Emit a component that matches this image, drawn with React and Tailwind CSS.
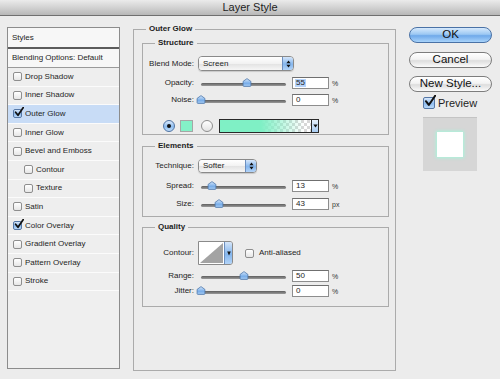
const STYLES = [
  { name: 'Drop Shadow' },
  { name: 'Inner Shadow' },
  { name: 'Outer Glow', checked: true, active: true },
  { name: 'Inner Glow' },
  { name: 'Bevel and Emboss' },
  { name: 'Contour', sub: true },
  { name: 'Texture', sub: true },
  { name: 'Satin' },
  { name: 'Color Overlay', checked: true },
  { name: 'Gradient Overlay' },
  { name: 'Pattern Overlay' },
  { name: 'Stroke' },
]

function CheckMark({ className }) {
  return (
    <svg className={className} viewBox="0 0 10 10" fill="none">
      <path d="M1.6 5.2 L4 8.3 L9.3 0.6" stroke="#111" strokeWidth="1.7" strokeLinecap="round" strokeLinejoin="round" />
    </svg>
  )
}

function Checkbox({ checked, big }) {
  const size = big ? 'w-[12px] h-[12px]' : 'w-[9px] h-[9px]'
  return (
    <span
      className={`relative block shrink-0 ${size} rounded-[2px] border ${
        checked
          ? 'border-[#5577a6] bg-[linear-gradient(#d8e8fb,#8fbdf0_55%,#b9d8f8)]'
          : 'border-[#8e8e8e] bg-[linear-gradient(#ffffff,#e6e6e6)]'
      }`}
    >
      {checked && (
        <CheckMark className={big ? 'absolute -top-[3px] left-[0px] w-[12px] h-[12px]' : 'absolute -top-[3px] left-[0px] w-[10px] h-[10px]'} />
      )}
    </span>
  )
}

function Thumb({ left }) {
  return (
    <svg className="absolute top-[1px] w-[10px] h-[9px]" style={{ left }} viewBox="0 0 10 9">
      <defs>
        <linearGradient id="tg" x1="0" y1="0" x2="0" y2="1">
          <stop offset="0" stopColor="#d7e8fb" />
          <stop offset="0.6" stopColor="#78ade9" />
          <stop offset="1" stopColor="#a9cdf4" />
        </linearGradient>
      </defs>
      <path d="M5 0.6 L8.9 3.4 L8.9 7.6 Q8.9 8.4 8.1 8.4 L1.9 8.4 Q1.1 8.4 1.1 7.6 L1.1 3.4 Z" fill="url(#tg)" stroke="#4d76ab" strokeWidth="0.8" />
    </svg>
  )
}

function Field({ children, sel }) {
  return (
    <div className="ml-[4px] w-[37px] h-[12px] flex items-center pl-[2px] bg-white border border-[#8d8d8d] border-t-[#6f6f6f] text-[8px] leading-none">
      <span className={sel ? 'bg-[#b6d4fb] px-[1px]' : 'px-[1px]'}>{children}</span>
    </div>
  )
}

function SliderRow({ label, value, pos, unit, sel, mt }) {
  return (
    <div className={`flex items-center h-[12px] ${mt}`}>
      <span className="w-[51px] text-right text-[8px] leading-none text-[#222]">{label}</span>
      <div className="relative ml-[4px] w-[90px] h-[12px]">
        <div className="absolute left-[3px] right-[2px] top-[6px] h-[3px] rounded-full bg-[linear-gradient(#5e5e5e,#9a9a9a)]" />
        <Thumb left={3 + pos * 85 - 5} />
      </div>
      <Field sel={sel}>{value}</Field>
      <span className="ml-[3px] text-[7px] leading-none text-[#333]">{unit}</span>
    </div>
  )
}

function Arrows() {
  return (
    <svg className="w-[5px] h-[8px]" viewBox="0 0 5 8">
      <path d="M2.5 0.5 L4.6 3.2 L0.4 3.2 Z M2.5 7.5 L4.6 4.8 L0.4 4.8 Z" fill="#111" />
    </svg>
  )
}

function Select({ value, width }) {
  return (
    <div className={`ml-[4px] ${width} h-full flex items-stretch rounded-[4px] border border-[#8a8a8a] overflow-hidden shadow-[0_1px_1px_rgba(0,0,0,0.15)]`}>
      <div className="flex-1 flex items-center pl-[4px] text-[8px] leading-none bg-[linear-gradient(#ffffff,#f2f2f2_50%,#e2e2e2_51%,#f6f6f6)]">{value}</div>
      <div className="w-[11px] flex items-center justify-center border-l border-[#6c8fbf] bg-[linear-gradient(#d5e6fa,#84b6ee_55%,#b3d4f8)]">
        <Arrows />
      </div>
    </div>
  )
}

function Group({ title, className, children }) {
  return (
    <fieldset className={`border border-[#ababab] p-0 m-0 min-w-0 ${className}`}>
      <legend className="ml-[12px] px-[3px] text-[8px] leading-[10px] font-bold text-[#1c1c1c]">{title}</legend>
      {children}
    </fieldset>
  )
}

function Radio({ on }) {
  return (
    <span
      className={`w-[12px] h-[12px] rounded-full border flex items-center justify-center ${
        on ? 'border-[#4f73a3] bg-[linear-gradient(#dbeafb,#8ebdf0_55%,#bddbf9)]' : 'border-[#8e8e8e] bg-[linear-gradient(#ffffff,#e4e4e4)]'
      }`}
    >
      {on && <span className="w-[4px] h-[4px] rounded-full bg-[#111]" />}
    </span>
  )
}

function Button({ children, primary }) {
  return (
    <div
      className={`w-[83px] h-[16px] rounded-full border flex items-center justify-center text-[11.5px] leading-none text-[#111] ${
        primary
          ? 'border-[#4a72a6] bg-[linear-gradient(#d6e9fc,#9cc8f3_45%,#6fa9ea_55%,#a8d3fa)]'
          : 'border-[#7d7d7d] bg-[linear-gradient(#ffffff,#f3f3f3_45%,#dddddd_55%,#fbfbfb)]'
      }`}
    >
      {children}
    </div>
  )
}

export default function App() {
  return (
    <div className="w-[500px] h-[379px] overflow-hidden bg-[#ececec] font-['Liberation_Sans',Arial,sans-serif] text-[#1e1e1e]">
      {/* title bar */}
      <div className="h-[16px] border-b border-[#707070] bg-[linear-gradient(#ebebeb,#d2d2d2_50%,#b8b8b8)] flex items-center justify-center">
        <span className="text-[11px] leading-none text-[#1d1d1d]">Layer Style</span>
      </div>

      <div className="flex items-start">
        {/* styles list */}
        <div className="ml-[7px] mt-[11px] w-[113px] h-[342px] border border-[#8c8c8c] bg-[#efefef] flex flex-col">
          <div className="h-[21px] flex items-center pl-[4px] text-[8px] bg-[#f7f7f7] border-b-2 border-[#5c5c5c]">Styles</div>
          <div className="h-[19px] flex items-center pl-[4px] text-[8px] bg-[#f7f7f7] border-b border-[#9a9a9a]">Blending Options: Default</div>
          {STYLES.map((s) => (
            <div
              key={s.name}
              className={`h-[18.6px] shrink-0 flex items-center gap-[3px] border-b border-[#fbfbfb] text-[8px] ${
                s.sub ? 'pl-[16px]' : 'pl-[5px]'
              } ${s.active ? 'bg-[#c8dcf6]' : 'bg-[#eeeeee]'}`}
            >
              <Checkbox checked={s.checked} />
              <span>{s.name}</span>
            </div>
          ))}
        </div>

        {/* settings */}
        <Group title="Outer Glow" className="ml-[13px] mt-[8px] w-[263px] h-[347px]">
          <div className="pl-[8px] pr-[6px]">
            <Group title="Structure" className="mt-[4px]">
              <div className="flex items-center h-[15px] mt-[8px]">
                <span className="w-[51px] text-right text-[8px] leading-none">Blend Mode:</span>
                <Select value="Screen" width="w-[96px]" />
              </div>
              <SliderRow label="Opacity:" value="55" pos={0.54} unit="%" sel mt="mt-[6px]" />
              <SliderRow label="Noise:" value="0" pos={0} unit="%" mt="mt-[5px]" />
              <div className="flex items-center h-[14px] mt-[13px] mb-[1px] pl-[20px]">
                <Radio on />
                <span className="ml-[5px] w-[13px] h-[12px] bg-[#84f1c7] border border-[#a6a6a6]" />
                <span className="ml-[8px]"><Radio /></span>
                <div className="ml-[6px] flex h-[14px]">
                  <div className="w-[93px] h-full border border-[#2a2a2a] bg-[linear-gradient(to_right,#7ff0c5_45%,rgba(127,240,197,0)_92%),repeating-conic-gradient(#d8d8d8_0%_25%,#ffffff_0%_50%)] [background-size:100%_100%,6px_6px]" />
                  <div className="w-[7px] h-full border border-l-0 border-[#2a2a2a] flex items-center justify-center bg-[linear-gradient(#e6f0fb,#a9cdf4)]">
                    <svg className="w-[5px] h-[4px]" viewBox="0 0 5 4"><path d="M0.3 0.5 L4.7 0.5 L2.5 3.6 Z" fill="#111" /></svg>
                  </div>
                </div>
              </div>
            </Group>

            <Group title="Elements" className="mt-[6px]">
              <div className="flex items-center h-[14px] mt-[8px]">
                <span className="w-[51px] text-right text-[8px] leading-none">Technique:</span>
                <Select value="Softer" width="w-[59px]" />
              </div>
              <SliderRow label="Spread:" value="13" pos={0.13} unit="%" mt="mt-[7px]" />
              <SliderRow label="Size:" value="43" pos={0.21} unit="px" mt="mt-[6px]" />
              <div className="h-[6px]" />
            </Group>

            <Group title="Quality" className="mt-[5px]">
              <div className="flex items-center h-[24px] mt-[9px]">
                <span className="w-[51px] text-right text-[8px] leading-none">Contour:</span>
                <div className="ml-[4px] flex h-full border border-[#8a8a8a] rounded-r-[3px] overflow-hidden">
                  <svg className="w-[25px] h-full bg-white" viewBox="0 0 25 22" preserveAspectRatio="none">
                    <path d="M1 21 L24 1 L24 21 Z" fill="#a3a3a3" />
                  </svg>
                  <div className="w-[8px] h-full border-l border-[#6c8fbf] flex items-center justify-center bg-[linear-gradient(#d5e6fa,#84b6ee_55%,#b3d4f8)]">
                    <svg className="w-[4px] h-[5px]" viewBox="0 0 4 5"><path d="M0.2 0.5 L3.8 0.5 L2 4.5 Z" fill="#111" /></svg>
                  </div>
                </div>
                <span className="ml-[12px]"><Checkbox /></span>
                <span className="ml-[5px] text-[8px] leading-none">Anti-aliased</span>
              </div>
              <SliderRow label="Range:" value="50" pos={0.5} unit="%" mt="mt-[5px]" />
              <SliderRow label="Jitter:" value="0" pos={0} unit="%" mt="mt-[3px]" />
              <div className="h-[9px]" />
            </Group>
          </div>
        </Group>

        {/* buttons */}
        <div className="ml-[13px] mt-[11px] flex flex-col">
          <Button primary>OK</Button>
          <div className="mt-[9px]"><Button>Cancel</Button></div>
          <div className="mt-[8px]"><Button>New Style...</Button></div>
          <div className="mt-[5px] h-[12px] ml-[14px] flex items-center gap-[3px]">
            <Checkbox checked big />
            <span className="text-[11px] leading-none">Preview</span>
          </div>
          <div className="mt-[8px] ml-[14px] w-[54px] h-[54px] bg-[#d6d6d6] border-t border-[#c4c4c4] flex items-center justify-center">
            <div className="w-[26px] h-[25px] bg-white shadow-[0_0_3px_1px_rgba(160,250,220,0.9)]" />
          </div>
        </div>
      </div>
    </div>
  )
}
